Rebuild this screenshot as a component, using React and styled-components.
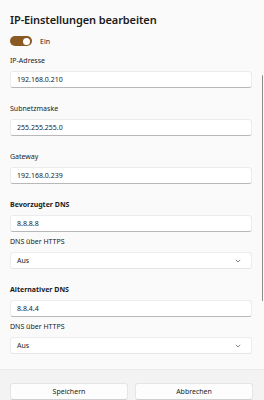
import React from 'react'
import styled, { createGlobalStyle } from 'styled-components';

const Global = createGlobalStyle`
    html, body { margin: 0; padding: 0; }
    body {
        font-family: "Noto Sans", "Open Sans", sans-serif;
        color: #1b1b1b;
        background: #fafafa;
    }
`;

const Page = styled.div`
    position: relative;
    width: 264px;
    height: 400px;
    display: flex;
    flex-direction: column;
    overflow: hidden;
    background: #fafafa;
`;

const Content = styled.div`
    display: flex;
    flex-direction: column;
    padding: 10px 12px 0 10px;
`;

const Title = styled.h1`
    margin: 0;
    font-size: 11px;
    line-height: 20px;
    font-weight: 600;
    letter-spacing: -0.1px;
`;

const ToggleRow = styled.div`
    display: flex;
    align-items: center;
    gap: 8px;
    height: 10px;
    margin: 6px 0 9px;
    font-size: 7px;
`;

const Toggle = styled.span`
    position: relative;
    width: 22px;
    height: 10px;
    border-radius: 5px;
    background: #8a5a22;
    &::after {
        content: "";
        position: absolute;
        right: 2px;
        top: 1.5px;
        width: 7px;
        height: 7px;
        border-radius: 50%;
        background: #fff;
    }
`;

const Group = styled.div`
    display: flex;
    flex-direction: column;
    margin-bottom: 15px;
`;

const Label = styled.div`
    font-size: 7px;
    line-height: 12px;
    font-weight: ${p => p.bold ? 700 : 400};
    margin-bottom: 4px;
    margin-top: ${p => p.sub ? '4px' : '0'};
`;

const Field = styled.div`
    box-sizing: border-box;
    height: 17px;
    display: flex;
    align-items: center;
    justify-content: space-between;
    padding: 0 10px 0 6px;
    background: #fff;
    border: 1px solid #ececec;
    border-bottom: 1px solid ${p => p.select ? '#e6e6e6' : '#b8b8b8'};
    border-radius: 3px;
    font-size: 7px;
`;

const Footer = styled.div`
    margin-top: auto;
    height: 37px;
    background: #f3f3f3;
    border-top: 1px solid #ececec;
    display: grid;
    grid-template-columns: 1fr 1fr;
    gap: 7px;
    padding: 13px 11px 0 10px;
    box-sizing: border-box;
`;

const Button = styled.div`
    height: 17px;
    box-sizing: border-box;
    display: flex;
    align-items: center;
    justify-content: center;
    background: #fdfdfd;
    border: 1px solid #e5e5e5;
    border-bottom-color: #d0d0d0;
    border-radius: 3px;
    font-size: 7px;
`;

const ScrollThumb = styled.div`
    position: absolute;
    left: 262px;
    top: 75px;
    width: 1px;
    height: 226px;
    background: #8a8a8a;
    border-radius: 1px;
`;

const Chevron = () => (
    <svg width="6" height="4" viewBox="0 0 6 4">
        <path d="M0.8 0.8 L3 3 L5.2 0.8" fill="none" stroke="#6b6b6b" strokeWidth="0.8" />
    </svg>
);

export default class App extends React.PureComponent {
    render(){
        return (
            <Page>
                <Global/>
                <Content>
                    <Title>IP-Einstellungen bearbeiten</Title>
                    <ToggleRow>
                        <Toggle/>
                        <span>Ein</span>
                    </ToggleRow>
                    <Group>
                        <Label>IP-Adresse</Label>
                        <Field>192.168.0.210</Field>
                    </Group>
                    <Group>
                        <Label>Subnetzmaske</Label>
                        <Field>255.255.255.0</Field>
                    </Group>
                    <Group>
                        <Label>Gateway</Label>
                        <Field>192.168.0.239</Field>
                    </Group>
                    <Group>
                        <Label bold>Bevorzugter DNS</Label>
                        <Field>8.8.8.8</Field>
                        <Label sub>DNS über HTTPS</Label>
                        <Field select>Aus<Chevron/></Field>
                    </Group>
                    <Group>
                        <Label bold>Alternativer DNS</Label>
                        <Field>8.8.4.4</Field>
                        <Label sub>DNS über HTTPS</Label>
                        <Field select>Aus<Chevron/></Field>
                    </Group>
                </Content>
                <Footer>
                    <Button>Speichern</Button>
                    <Button>Abbrechen</Button>
                </Footer>
                <ScrollThumb/>
            </Page>
        )
    }
}
